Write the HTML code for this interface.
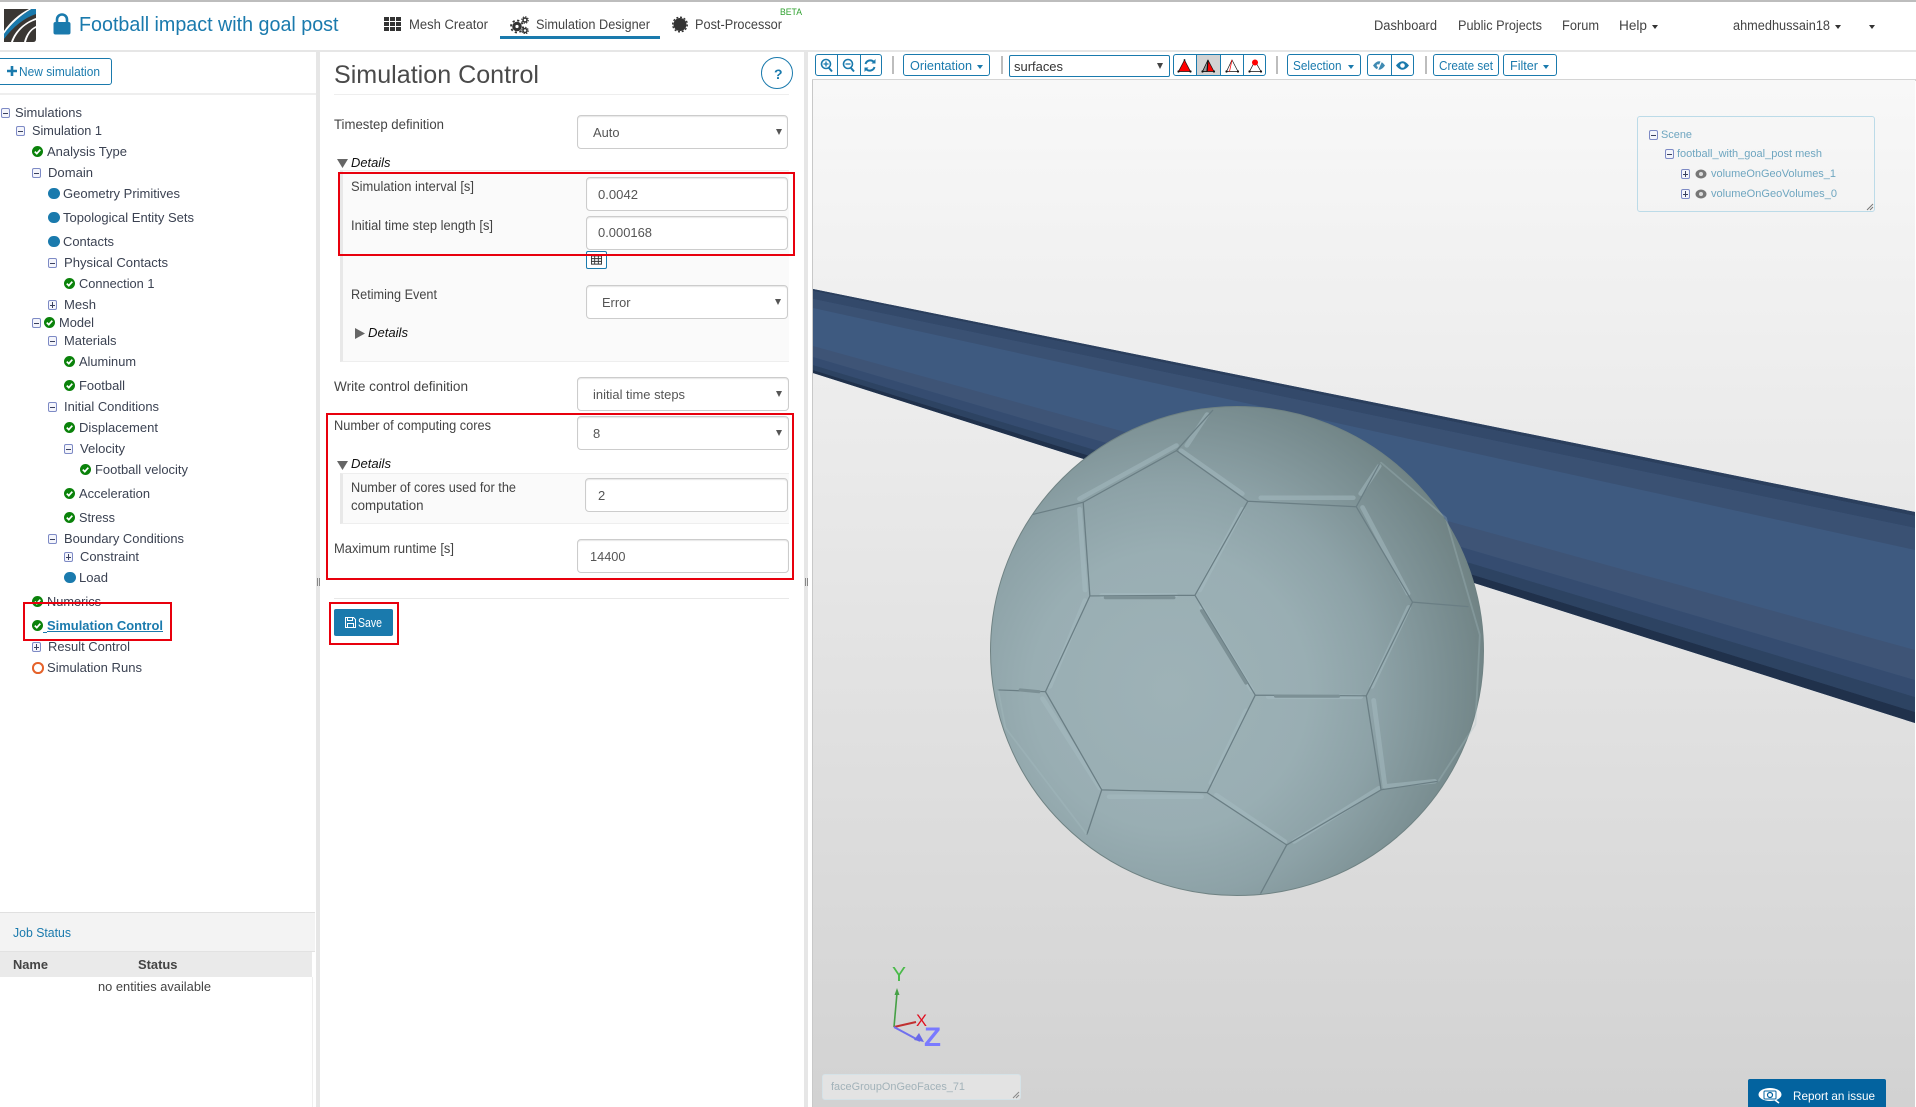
<!DOCTYPE html>
<html lang="en"><head><meta charset="utf-8"><title>Simulation Control</title>
<style>
html,body{margin:0;padding:0;background:#fff}
#p{position:relative;width:1916px;height:1107px;overflow:hidden;font-family:"Liberation Sans",sans-serif;font-size:13px;color:#3b4252;background:#fff}
.t{position:absolute;line-height:20px;margin-top:-10px;white-space:nowrap;transform-origin:0 50%}
.a{position:absolute}
.l{color:#444;font-size:13.5px;margin-top:-9px}
.n{color:#444;font-size:13.5px}
.b{color:#1a7aad;font-size:13px}
.inp{position:absolute;box-sizing:border-box;background:#fff;border:1px solid #ccc;border-radius:4px;box-shadow:inset 0 1px 1px rgba(0,0,0,.1)}
.v{color:#555;font-size:13px}
.btn{position:absolute;box-sizing:border-box;top:54px;height:22px;border:1px solid #1a7aad;border-radius:3px;background:#fff}
.dv{position:absolute;top:54px;height:22px;width:1px;background:#1a7aad}
.sep{position:absolute;top:56px;height:18px;width:2px;background:#bdbdbd}
.car{position:absolute;width:0;height:0;border-left:3.5px solid transparent;border-right:3.5px solid transparent;border-top:4px solid #1a7aad}
.arr{position:absolute;width:0;height:0;border-left:3.5px solid transparent;border-right:3.5px solid transparent;border-top:6px solid #555}
.red{position:absolute;box-sizing:border-box;border:2px solid #e8000d;z-index:5}
.pn{position:absolute;box-sizing:border-box;background:#fafafa;border-left:3px solid #e8e8e8;border-top:1px solid #eee;border-bottom:1px solid #eee}
.dt{font-style:italic;color:#111;font-size:13px}
.i{position:absolute;width:11px;height:11px;margin-top:-6px}
.bx{position:absolute;box-sizing:border-box;width:9px;height:10px;margin-top:-5px;border:1px solid #7d8ac5;border-radius:2px;background:#f4f5fb}
.bx:before{content:"";position:absolute;left:1px;right:1px;top:3.500px;height:1px;background:#3a4160}
.bx.p:after{content:"";position:absolute;left:3px;width:1px;top:1px;bottom:1px;background:#3a4160}
.dot{position:absolute;width:11.5px;height:11.5px;margin-top:-6.25px;border-radius:50%;background:#1a7aad}
</style></head><body><div id="p">
<svg width="0" height="0" style="position:absolute"><defs>
<symbol id="ck" viewBox="0 0 11 11"><circle cx="5.5" cy="5.5" r="5.5" fill="#0a820a"/><path d="M2.8 5.6 4.8 7.6 8.3 3.7" fill="none" stroke="#fff" stroke-width="1.7"/></symbol>
</defs></svg>

<!-- header -->
<div class="a" style="left:0;top:0;width:1916px;height:1.5px;background:#bdbdbd"></div>
<div class="a" style="left:0;top:50px;width:1916px;height:1.5px;background:#e6e6e6"></div>
<svg class="a" style="left:4px;top:9px" width="32" height="33" viewBox="0 0 32 33">
<path d="M0 0H32V30Q32 33 29 33H0Z" fill="#3a3734"/>
<path d="M25 0H27.500C17 6 7 15 0 25V22C6 13 15 5 25 0Z" fill="#fff"/>
<path d="M27.500 0H32V5C20 9 9 18 0 30V25C7 15 17 6 27.500 0Z" fill="#1a7aad"/>
<path d="M32 9V11C22 14 13 22 9 33H7C11 21 21 13 32 9Z" fill="#fff"/>
<path d="M32 17V19C27 21 24 26 22 33H20C22 25 26 20 32 17Z" fill="#fff"/>
</svg>
<svg class="a" style="left:53px;top:13px" width="18" height="22" viewBox="0 0 18 22"><path d="M4 10V6.500a5 5 0 0 1 10 0V10" fill="none" stroke="#1a7aad" stroke-width="2.6"/><rect x="0.500" y="9" width="17" height="12.500" rx="2" fill="#1a7aad"/></svg>
<span class="t" style="left:78.500px;top:25px;font-size:20px;color:#1a7aad;--w:259.500">Football impact with goal post</span>
<svg class="a" style="left:384px;top:17px" width="17" height="14" viewBox="0 0 17 14" fill="#333"><rect width="5" height="4"/><rect x="6" width="5" height="4"/><rect x="12" width="5" height="4"/><rect y="5" width="5" height="4"/><rect x="6" y="5" width="5" height="4"/><rect x="12" y="5" width="5" height="4"/><rect y="10" width="5" height="4"/><rect x="6" y="10" width="5" height="4"/><rect x="12" y="10" width="5" height="4"/></svg>
<span class="t n" style="left:409px;top:24.500px;--w:79">Mesh Creator</span>
<svg class="a" style="left:510px;top:16px" width="19" height="18" viewBox="0 0 19 18"><circle cx="7" cy="10.500" r="3.200" fill="none" stroke="#333" stroke-width="3.200"/><circle cx="7" cy="10.500" r="6" fill="none" stroke="#333" stroke-width="1.800" stroke-dasharray="2.200 2.500"/><circle cx="15" cy="4" r="2" fill="none" stroke="#333" stroke-width="1.500"/><circle cx="15" cy="4" r="3.300" fill="none" stroke="#333" stroke-width="1" stroke-dasharray="1.400 1.200"/><circle cx="15" cy="14.500" r="2" fill="none" stroke="#333" stroke-width="1.500"/><circle cx="15" cy="14.500" r="3.300" fill="none" stroke="#333" stroke-width="1" stroke-dasharray="1.400 1.200"/></svg>
<span class="t n" style="left:536px;top:24.500px;--w:114">Simulation Designer</span>
<div class="a" style="left:500px;top:36px;width:160px;height:3px;background:#1a7aad"></div>
<svg class="a" style="left:672px;top:16px" width="16" height="17" viewBox="0 0 16 17"><circle cx="8" cy="8.500" r="6.500" fill="#333"/><circle cx="8" cy="8.500" r="7.300" fill="none" stroke="#333" stroke-width="1.400" stroke-dasharray="2 1.800"/></svg>
<span class="t n" style="left:695px;top:24.500px;--w:87">Post-Processor</span>
<span class="t" style="left:780px;top:11.500px;font-size:9px;color:#2ea02e;--w:22">BETA</span>
<span class="t n" style="left:1374px;top:25.500px;--w:63">Dashboard</span>
<span class="t n" style="left:1458px;top:25.500px;--w:84">Public Projects</span>
<span class="t n" style="left:1562px;top:25.500px;--w:37">Forum</span>
<span class="t n" style="left:1619px;top:25.500px;--w:28">Help</span>
<div class="car" style="left:1652px;top:25px;border-top-color:#333"></div>
<span class="t n" style="left:1733px;top:25.500px;--w:97">ahmedhussain18</span>
<div class="car" style="left:1835px;top:25px;border-top-color:#333"></div>
<div class="car" style="left:1869px;top:25px;border-top-color:#333"></div>

<!-- left pane -->
<div class="a" style="left:316px;top:51px;width:4px;height:1056px;background:#e6e6e6"></div>
<div class="a" style="left:-3px;top:58px;width:115px;height:27px;box-sizing:border-box;border:1px solid #1a7aad;border-radius:3px"></div>
<svg class="a" style="left:7px;top:66px" width="10" height="10" viewBox="0 0 10 10"><path d="M5 0V10M0 5H10" stroke="#1a7aad" stroke-width="2.600"/></svg>
<span class="t b" style="left:19px;top:71.500px;font-size:12.500px;--w:81">New simulation</span>
<div class="a" style="left:0;top:93px;width:316px;height:1.500px;background:#eee"></div>

<div class="bx" style="left:1px;top:113px"></div><span class="t" style="left:15px;top:112.500px;--w:67">Simulations</span>
<div class="bx" style="left:16px;top:131px"></div><span class="t" style="left:32px;top:130.500px;--w:70">Simulation 1</span>
<svg class="i" style="left:32px;top:152px"><use href="#ck"/></svg><span class="t" style="left:47px;top:151.500px;--w:80">Analysis Type</span>
<div class="bx" style="left:32px;top:173px"></div><span class="t" style="left:47.500px;top:172.500px;--w:45">Domain</span>
<div class="dot" style="left:48px;top:194px"></div><span class="t" style="left:63px;top:193.500px;--w:117">Geometry Primitives</span>
<div class="dot" style="left:48px;top:218px"></div><span class="t" style="left:63px;top:217.500px;--w:131">Topological Entity Sets</span>
<div class="dot" style="left:48px;top:242px"></div><span class="t" style="left:63px;top:241.500px;--w:51">Contacts</span>
<div class="bx" style="left:48px;top:263px"></div><span class="t" style="left:63.500px;top:262.500px;--w:104">Physical Contacts</span>
<svg class="i" style="left:64px;top:284px"><use href="#ck"/></svg><span class="t" style="left:79px;top:283.500px;--w:75.500">Connection 1</span>
<div class="bx p" style="left:48px;top:305px"></div><span class="t" style="left:63.500px;top:304.500px;--w:32">Mesh</span>
<div class="bx" style="left:32px;top:323px"></div><svg class="i" style="left:44px;top:323px"><use href="#ck"/></svg><span class="t" style="left:59px;top:322.500px;--w:35">Model</span>
<div class="bx" style="left:48px;top:341px"></div><span class="t" style="left:63.500px;top:340.500px;--w:52.500">Materials</span>
<svg class="i" style="left:64px;top:362px"><use href="#ck"/></svg><span class="t" style="left:79px;top:361.500px;--w:57">Aluminum</span>
<svg class="i" style="left:64px;top:386px"><use href="#ck"/></svg><span class="t" style="left:79px;top:385.500px;--w:46">Football</span>
<div class="bx" style="left:48px;top:407px"></div><span class="t" style="left:63.500px;top:406.500px;--w:95">Initial Conditions</span>
<svg class="i" style="left:64px;top:428px"><use href="#ck"/></svg><span class="t" style="left:79px;top:427.500px;--w:79">Displacement</span>
<div class="bx" style="left:64px;top:449px"></div><span class="t" style="left:80px;top:448.500px;--w:45">Velocity</span>
<svg class="i" style="left:80px;top:470px"><use href="#ck"/></svg><span class="t" style="left:95px;top:469.500px;--w:93">Football velocity</span>
<svg class="i" style="left:64px;top:494px"><use href="#ck"/></svg><span class="t" style="left:79px;top:493.500px;--w:71">Acceleration</span>
<svg class="i" style="left:64px;top:518px"><use href="#ck"/></svg><span class="t" style="left:79px;top:517.500px;--w:36">Stress</span>
<div class="bx" style="left:48px;top:539px"></div><span class="t" style="left:63.500px;top:538.500px;--w:120">Boundary Conditions</span>
<div class="bx p" style="left:64px;top:557px"></div><span class="t" style="left:80px;top:556.500px;--w:59">Constraint</span>
<div class="dot" style="left:64px;top:578px"></div><span class="t" style="left:79px;top:577.500px;--w:29">Load</span>
<svg class="i" style="left:32px;top:602px"><use href="#ck"/></svg><span class="t" style="left:47px;top:601.500px;--w:54">Numerics</span>
<svg class="i" style="left:32px;top:626px"><use href="#ck"/></svg><span class="t" style="left:47px;top:625.500px;font-weight:bold;color:#1a7aad;text-decoration:underline;--w:116">Simulation Control</span>
<div class="a" style="left:43px;top:632px;width:4px;height:1px;background:#1a7aad"></div>
<div class="bx p" style="left:32px;top:647px"></div><span class="t" style="left:48px;top:646.500px;--w:82">Result Control</span>
<div class="a" style="left:32px;top:662px;width:11.500px;height:11.500px;box-sizing:border-box;border:2px solid #e5622a;border-radius:50%"></div><span class="t" style="left:47px;top:667.500px;--w:95">Simulation Runs</span>
<div class="red" style="left:23px;top:602px;width:149px;height:39px"></div>
<div class="a" style="left:317px;top:578px;width:1px;height:8px;background:#888;box-shadow:2px 0 0 #888"></div>

<!-- job status -->
<div class="a" style="left:0;top:912px;width:315px;height:40px;box-sizing:border-box;background:#f3f3f3;border-top:1.500px solid #e0e0e0;border-bottom:1px solid #e2e2e2"></div>
<span class="t b" style="left:13px;top:932.500px;font-size:13px;--w:58">Job Status</span>
<div class="a" style="left:0;top:952px;width:312px;height:25px;background:#eaeaea"></div>
<span class="t" style="left:13px;top:964.500px;font-weight:bold;color:#444;--w:35">Name</span>
<span class="t" style="left:137.500px;top:964.500px;font-weight:bold;color:#444;--w:39.500">Status</span>
<span class="t" style="left:98px;top:986.500px;color:#444;--w:113">no entities available</span>
<div class="a" style="left:312px;top:977px;width:1px;height:130px;background:#eee"></div>

<!-- centre pane -->
<div class="a" style="left:804px;top:51px;width:4px;height:1056px;background:#e6e6e6"></div>
<span class="t" style="left:334px;top:74.500px;font-size:25px;color:#4a4a4a;--w:205">Simulation Control</span>
<div class="a" style="left:334px;top:94px;width:455px;height:1px;background:#eee"></div>
<div class="a" style="left:761px;top:57px;width:32px;height:32px;box-sizing:border-box;border:1px solid #1a7aad;border-radius:50%"></div>
<span class="t" style="left:774px;top:73.500px;font-weight:bold;color:#1a7aad;font-size:14px">?</span>

<span class="t l" style="left:334px;top:124px;--w:110">Timestep definition</span>
<div class="inp" style="left:577px;top:115px;width:211px;height:34px"></div>
<span class="t v" style="left:593px;top:132.500px;--w:26.500">Auto</span><div class="arr" style="left:776px;top:129px"></div>
<svg class="a" style="left:337px;top:159px" width="11" height="9"><path d="M0 0H11L5.500 9Z" fill="#666"/></svg>
<span class="t dt" style="left:350.500px;top:162.500px;--w:39.500">Details</span>

<div class="pn" style="left:340px;top:170px;width:449px;height:192px"></div>
<span class="t l" style="left:351px;top:186px;--w:123">Simulation interval [s]</span>
<div class="inp" style="left:586px;top:177px;width:202px;height:34px"></div>
<span class="t v" style="left:597.500px;top:194.500px;--w:40">0.0042</span>
<span class="t l" style="left:351px;top:225px;--w:142">Initial time step length [s]</span>
<div class="inp" style="left:586px;top:216px;width:202px;height:34px"></div>
<span class="t v" style="left:597.500px;top:233px;--w:54">0.000168</span>
<div class="a" style="left:586px;top:251px;width:21px;height:18px;box-sizing:border-box;border:1px solid #1a7aad;border-radius:2px;background:#fff"></div>
<svg class="a" style="left:591px;top:255px" width="11" height="10" viewBox="0 0 12 10"><path d="M.5.5H11.500V9.500H.5ZM.5 3.500H11.500M.5 6.500H11.500M4 .5V9.500M8 .5V9.500" fill="none" stroke="#333" stroke-width="1"/></svg>
<div class="red" style="left:338px;top:172px;width:457px;height:84px"></div>
<span class="t l" style="left:351px;top:294px;--w:86">Retiming Event</span>
<div class="inp" style="left:586px;top:285px;width:202px;height:34px"></div>
<span class="t v" style="left:602px;top:302.500px;--w:28.500">Error</span><div class="arr" style="left:775px;top:299px"></div>
<svg class="a" style="left:355px;top:328px" width="10" height="11"><path d="M0 0V11L10 5.500Z" fill="#666"/></svg>
<span class="t dt" style="left:367.500px;top:332.500px;--w:40">Details</span>

<span class="t l" style="left:334px;top:386px;--w:134">Write control definition</span>
<div class="inp" style="left:577px;top:377px;width:212px;height:34px"></div>
<span class="t v" style="left:593px;top:394.500px;--w:92">initial time steps</span><div class="arr" style="left:776px;top:391px"></div>
<span class="t l" style="left:334px;top:425px;--w:157">Number of computing cores</span>
<div class="inp" style="left:577px;top:416px;width:212px;height:34px"></div>
<span class="t v" style="left:593px;top:433.500px">8</span><div class="arr" style="left:776px;top:430px"></div>
<svg class="a" style="left:337px;top:461px" width="11" height="9"><path d="M0 0H11L5.500 9Z" fill="#666"/></svg>
<span class="t dt" style="left:350.500px;top:463.500px;--w:40">Details</span>
<div class="pn" style="left:340px;top:473px;width:449px;height:51px"></div>
<span class="t l" style="left:351px;top:487px;--w:165">Number of cores used for the</span>
<span class="t l" style="left:351px;top:505px;--w:72.500">computation</span>
<div class="inp" style="left:585px;top:478px;width:203px;height:34px"></div>
<span class="t v" style="left:598px;top:495.500px">2</span>
<span class="t l" style="left:334px;top:548px;--w:120">Maximum runtime [s]</span>
<div class="inp" style="left:577px;top:539px;width:212px;height:34px"></div>
<span class="t v" style="left:590px;top:557px;--w:35.500">14400</span>
<div class="red" style="left:326px;top:413px;width:468px;height:167px"></div>
<div class="a" style="left:334px;top:598px;width:455px;height:1px;background:#e8e8e8"></div>
<div class="a" style="left:334px;top:609px;width:59px;height:27px;background:#1a7aad;border-radius:2px"></div>
<svg class="a" style="left:345px;top:617px" width="11" height="11" viewBox="0 0 11 11"><path d="M.5.5H8.500L10.500 2.500V10.500H.5ZM2.500.5V3.500H7.500V.5M2.500 10.500V6.500H8.500V10.500" fill="none" stroke="#fff" stroke-width="1"/></svg>
<span class="t" style="left:358px;top:623px;color:#fff;font-size:12.500px;--w:24">Save</span>
<div class="red" style="left:329px;top:602px;width:70px;height:43px"></div>
<div class="a" style="left:805px;top:578px;width:1px;height:8px;background:#888;box-shadow:2px 0 0 #888"></div>

<!-- toolbar -->
<div class="btn" style="left:815px;width:67px"></div><div class="dv" style="left:837px"></div><div class="dv" style="left:860px"></div>
<svg class="a" style="left:819px;top:58px" width="60" height="15" viewBox="0 0 60 15" fill="none" stroke="#1a7aad">
<circle cx="7" cy="6" r="4.500" stroke-width="1.600"/><path d="M10 10 13 13.500" stroke-width="2"/><path d="M4.500 6H9.500M7 3.500V8.500" stroke-width="1.300"/>
<circle cx="29" cy="6" r="4.500" stroke-width="1.600"/><path d="M32 10 35 13.500" stroke-width="2"/><path d="M26.500 6H31.500" stroke-width="1.300"/>
<path d="M46.500 6A5 5 0 0 1 55 4M55.500 9A5 5 0 0 1 47 11" stroke-width="2"/><path d="M56.500 1V5.500H52.500M45.500 14V9.500H49.500" fill="#1a7aad" stroke="none"/>
</svg>
<div class="sep" style="left:892px"></div>
<div class="btn" style="left:903px;width:87px"></div><span class="t b" style="left:909.500px;top:66px;--w:62">Orientation</span><div class="car" style="left:976.500px;top:65px"></div>
<div class="sep" style="left:1001px"></div>
<div class="a" style="left:1009px;top:55px;width:161px;height:22px;box-sizing:border-box;border:1px solid #1a7aad;border-radius:2px;background:#fff"></div>
<span class="t" style="left:1014px;top:66.500px;color:#333;--w:49">surfaces</span><div class="arr" style="left:1157px;top:63px;border-top-color:#444;border-left-width:3px;border-right-width:3px"></div>
<div class="btn" style="left:1173px;width:93px"></div>
<div class="a" style="left:1196px;top:55px;width:24px;height:20px;background:#d2d2d2"></div>
<div class="dv" style="left:1196px"></div><div class="dv" style="left:1220px"></div><div class="dv" style="left:1243px"></div>
<svg class="a" style="left:1176px;top:57.500px" width="88" height="18" viewBox="0 0 88 18" stroke="#111" stroke-width=".7">
<path d="M8.500 2 14.500 13.500 2.500 13.500Z" fill="#f00"/><g fill="#111" stroke="none"><circle cx="2.500" cy="13.500" r="1.100"/><circle cx="14.500" cy="13.500" r="1.100"/><circle cx="8.500" cy="2" r=".9"/></g>
<path d="M32 2 38 13.500 26.500 13.500Z" fill="#f00"/><path d="M32 2 26.500 13.500H31Z" fill="#999"/><path d="M32 2 31 13.500" stroke-width="1.200"/><g fill="#111" stroke="none"><circle cx="26.500" cy="13.500" r="1.100"/><circle cx="38" cy="13.500" r="1.100"/></g>
<path d="M56 2 62 13.500 50.500 13.500Z" fill="#fff"/><path d="M56 2 53.500 13.500" stroke="#f00"/><g fill="#111" stroke="none"><circle cx="50.500" cy="13.500" r="1.100"/><circle cx="62" cy="13.500" r="1.100"/></g>
<path d="M79 3 85 13.500 73.500 13.500Z" fill="#fff"/><circle cx="79" cy="4.500" r="3" fill="#f00" stroke="none"/><g fill="#111" stroke="none"><circle cx="73.500" cy="13.500" r="1.100"/><circle cx="85" cy="13.500" r="1.100"/></g>
</svg>
<div class="sep" style="left:1276px"></div>
<div class="btn" style="left:1287px;width:74px"></div><span class="t b" style="left:1293px;top:66px;--w:48.500">Selection</span><div class="car" style="left:1348px;top:65px"></div>
<div class="btn" style="left:1367px;width:47px"></div><div class="dv" style="left:1391px"></div>
<svg class="a" style="left:1372px;top:59.500px" width="40" height="11" viewBox="0 0 40 11"><path d="M1 5.500Q7-3 13 5.500 7 14 1 5.500Z" fill="#3f8ab2"/><path d="M10 0 5 11" stroke="#fff" stroke-width="1.400"/><circle cx="6" cy="5.500" r="1.300" fill="#fff"/><path d="M24 5.500Q30.500-3 37 5.500 30.500 14 24 5.500Z" fill="#1a7aad"/><circle cx="30.500" cy="5.500" r="2.300" fill="#fff"/></svg>
<div class="sep" style="left:1425px"></div>
<div class="btn" style="left:1433px;width:66px"></div><span class="t b" style="left:1439px;top:66px;--w:54">Create set</span>
<div class="btn" style="left:1503px;width:54px"></div><span class="t b" style="left:1510px;top:66px;--w:28">Filter</span><div class="car" style="left:1543px;top:65px"></div>
<div class="a" style="left:812px;top:79px;width:1104px;height:1.500px;background:#d4d4d4"></div>

<!-- viewport -->
<div class="a" style="left:812px;top:80px;width:1.500px;height:1027px;background:#c8c8c8"></div>
<div class="a" style="left:813px;top:80px;width:1102px;height:1027px;background:linear-gradient(#f8f8f8,#d2d2d2)"></div>
<svg class="a" style="left:0;top:0" width="1916" height="1107" viewBox="0 0 1916 1107">
<defs><radialGradient id="bg" gradientUnits="userSpaceOnUse" cx="1170" cy="690" r="345"><stop offset="0" stop-color="#9eb2b7"/><stop offset=".4" stop-color="#99aeb3"/><stop offset=".6" stop-color="#8da2a7"/><stop offset=".85" stop-color="#778b8e"/><stop offset="1" stop-color="#6b7d7d"/></radialGradient></defs>
<polygon points="813,289 1915,512 1915,723 813,373" fill="#3e5a80"/>
<polygon points="813,289 1915,512 1915,516 813,291" fill="#2b3f5d"/>
<polygon points="813,291 1915,516 1915,528 813,299" fill="#33496a"/>
<polygon points="813,299 1915,528 1915,550 813,308" fill="#3a5173"/>
<polygon points="813,346 1915,650 1915,680 813,357" fill="#3e5476"/>
<polygon points="813,357 1915,680 1915,697 813,365" fill="#354c70"/>
<polygon points="813,365 1915,697 1915,712 813,370" fill="#2d4362"/>
<polygon points="813,370 1915,712 1915,723 813,373" fill="#20314b"/>
<ellipse cx="1237" cy="651" rx="246.500" ry="244.500" fill="url(#bg)" stroke="#6f8283" stroke-width="1"/>
<g transform="translate(950,380) scale(.37,.3444)" fill="none" stroke-linejoin="round" stroke-linecap="round">
<g stroke="#a6bcc1" stroke-width="13" opacity=".5">
<path d="M350 345 612 190M625 205 790 330M790 375 675 610M350 375 365 610M410 625H610M680 660 815 900M840 342H1090M1115 370 1238 620M1240 660 1140 890M270 890 365 640M250 925 405 1185M720 1205 905 1340M930 1340 1160 1185M430 1210H680M1145 930 1175 1175M860 920H1110M800 960 705 1170M640 190 695 100M1110 330 1160 250M1175 1180 1310 1165"/></g>
<g stroke="#6a7e84" stroke-width="3.500">
<path d="M360 355 612 205 805 352 662 625 378 627ZM805 352 1098 368 1250 645 1125 917 825 915 662 625M378 627 258 905 410 1190 695 1198 825 915M1125 917 1165 1190 910 1350 695 1198"/>
<path d="M612 205 710 88M1098 368 1160 245M1250 645 1400 658M1165 1190 1320 1165M910 1350 840 1490M410 1190 370 1320M258 905 130 900M360 355 225 390"/></g>
<g stroke="#7c9095" stroke-width="9"><path d="M420 632H605M680 670 800 880M880 918H1050M190 900 240 905"/></g>
<g stroke="#a9bfc4" stroke-width="5" opacity=".3"><path d="M1165 240 1340 400 1432 740 1420 1000 1320 1165M130 900 150 1010 370 1320"/></g>
</g>
<!-- axes -->
<path d="M894 1027 897 993" stroke="#45a045" stroke-width="1.600" fill="none"/><path d="M897 988 894.500 995H899.500Z" fill="#45a045"/>
<path d="M894 1027 916 1022" stroke="#c03030" stroke-width="2" fill="none"/>
<path d="M894 1027 920 1041" stroke="#7070ee" stroke-width="2" fill="none"/><path d="M924 1042 914 1040 919 1033Z" fill="#6a6ae8"/>
<text x="892" y="981" font-family="Liberation Sans,sans-serif" font-size="20" fill="#4aba4a" textLength="14" lengthAdjust="spacingAndGlyphs">Y</text>
<text x="916" y="1026" font-family="Liberation Sans,sans-serif" font-size="17" fill="#e01020" textLength="11" lengthAdjust="spacingAndGlyphs">X</text>
<text x="924" y="1046" font-family="Liberation Sans,sans-serif" font-size="27" font-weight="bold" fill="#7a7aff" textLength="17" lengthAdjust="spacingAndGlyphs">Z</text>
</svg>

<!-- scene box -->
<div class="a" style="left:1637px;top:116px;width:238px;height:96px;box-sizing:border-box;border:1px solid #bcdbe8;border-radius:3px"></div>
<div class="bx" style="left:1649px;top:135px"></div><span class="t" style="left:1661px;top:135px;font-size:11px;color:#6fa6c0;--w:31">Scene</span>
<div class="bx" style="left:1665px;top:154px"></div><span class="t" style="left:1677px;top:153.500px;font-size:11px;color:#6fa6c0;--w:145">football_with_goal_post mesh</span>
<div class="bx p" style="left:1681px;top:174px"></div>
<svg class="a" style="left:1695px;top:169px" width="12" height="10" viewBox="0 0 12 10"><ellipse cx="6" cy="5" rx="5.500" ry="4.500" fill="#777"/><circle cx="6" cy="5" r="2" fill="#ddd"/></svg>
<span class="t" style="left:1711px;top:173.500px;font-size:11px;color:#6fa6c0;--w:125">volumeOnGeoVolumes_1</span>
<div class="bx p" style="left:1681px;top:194px"></div>
<svg class="a" style="left:1695px;top:189px" width="12" height="10" viewBox="0 0 12 10"><ellipse cx="6" cy="5" rx="5.500" ry="4.500" fill="#777"/><circle cx="6" cy="5" r="2" fill="#ddd"/></svg>
<span class="t" style="left:1711px;top:193.500px;font-size:11px;color:#6fa6c0;--w:126">volumeOnGeoVolumes_0</span>
<svg class="a" style="left:1866px;top:203px" width="8" height="8"><path d="M1 7 7 1M4 7 7 4" stroke="#777"/></svg>

<!-- info box -->
<div class="a" style="left:822px;top:1074px;width:199px;height:26px;box-sizing:border-box;background:#e3e3e3;border:1px solid #d5e2e7;border-radius:3px"></div>
<span class="t" style="left:831px;top:1087px;font-size:11px;color:#a2b2b9;--w:134">faceGroupOnGeoFaces_71</span>
<svg class="a" style="left:1012px;top:1091px" width="8" height="8"><path d="M1 7 7 1M4 7 7 4" stroke="#888"/></svg>

<!-- report -->
<div class="a" style="left:1748px;top:1079px;width:138px;height:28px;background:#03639f;border-radius:2px 2px 0 0"></div>
<svg class="a" style="left:1758px;top:1087px" width="24" height="17" viewBox="0 0 24 17"><ellipse cx="12" cy="7.500" rx="11.500" ry="6.500" fill="#fff"/><rect x="6" y="4" width="12" height="8" rx="1" fill="none" stroke="#03639f" stroke-width="1"/><circle cx="12" cy="8" r="2.500" fill="none" stroke="#03639f" stroke-width="1.200"/><path d="M17 13 21 16" stroke="#fff" stroke-width="1.600"/></svg>
<span class="t" style="left:1793px;top:1095.500px;color:#fff;font-size:12px;--w:82">Report an issue</span>
</div>
<script>
document.querySelectorAll('.t').forEach(function(e){var w=parseFloat(e.style.getPropertyValue('--w'));if(w){var a=e.getBoundingClientRect().width;if(a>0)e.style.transform='scaleX('+(w/a)+')';}});
</script>
</body></html>
